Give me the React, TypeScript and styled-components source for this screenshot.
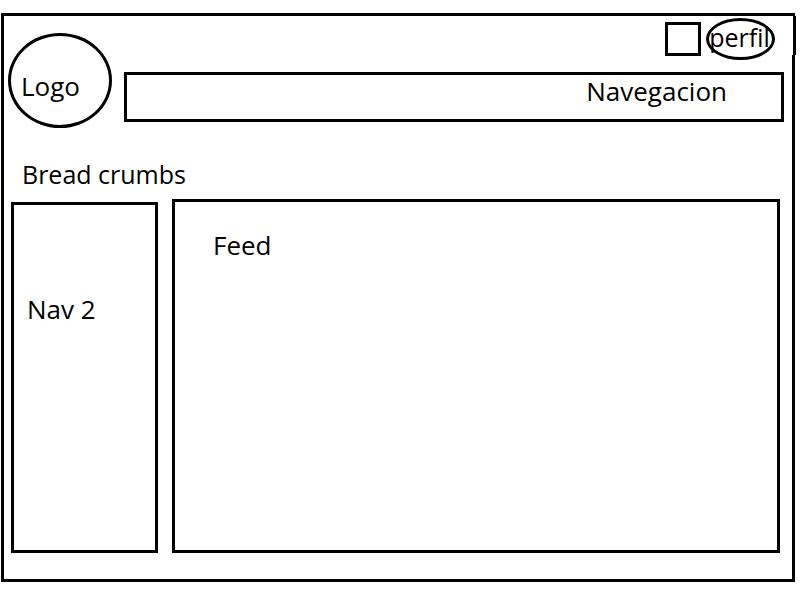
import React from "react";
import styled, { createGlobalStyle } from "styled-components";

const GlobalStyle = createGlobalStyle`
  *, *::before, *::after { box-sizing: border-box; }
  body {
    margin: 0;
    background: #fff;
    color: #000;
    font-family: "Open Sans", "Noto Sans", sans-serif;
    font-size: 26px;
    line-height: 32px;
  }
  a { color: inherit; text-decoration: none; }
`;

const Page = styled.div`
  display: flex;
  min-height: 100vh;
  padding: 13px 5px 18px 1px;
`;

const Frame = styled.div`
  position: relative;
  flex: 1;
  display: flex;
  flex-direction: column;
  min-width: 0;
  border: 3px solid #000;

  &::after {
    content: "";
    position: absolute;
    top: 0;
    right: -4px;
    width: 4px;
    height: 39px;
    background: #000;
    border-left: 1px solid #fff;
  }
`;

const Header = styled.header`
  display: flex;
  gap: 12px;
  padding: 2px 8px 0 4px;
`;

const Logo = styled.a`
  flex: none;
  width: 104px;
  height: 95px;
  margin-top: 15px;
  padding: 34px 0 0 10px;
  border: 3px solid #000;
  border-radius: 50%;
`;

const HeaderMain = styled.div`
  flex: 1;
  display: flex;
  flex-direction: column;
  gap: 12px;
  min-width: 0;
`;

const UserTools = styled.div`
  display: flex;
  align-items: center;
  justify-content: flex-end;
  gap: 5px;
  padding-right: 9px;
`;

const SquareButton = styled.button`
  width: 36px;
  height: 34px;
  padding: 0;
  background: #fff;
  border: 3px solid #000;
`;

const ProfileButton = styled.button`
  display: flex;
  justify-content: center;
  width: 69px;
  height: 42px;
  padding: 0 2px 2px 0;
  background: #fff;
  border: 3px solid #000;
  border-radius: 50%;
  color: inherit;
  font: inherit;
  font-size: 25px;
  white-space: nowrap;
`;

const NavBar = styled.nav`
  display: flex;
  justify-content: flex-end;
  height: 50px;
  padding-right: 54px;
  border: 3px solid #000;
`;

const Breadcrumbs = styled.nav`
  padding: 30px 18px 9px;
  font-size: 25px;
`;

const Content = styled.div`
  flex: 1;
  display: flex;
  gap: 14px;
  padding: 0 12px 26px 7px;
`;

const SideNav = styled.nav`
  flex: none;
  width: 147px;
  margin-top: 3px;
  padding: 88px 13px 0;
  border: 3px solid #000;
`;

const Feed = styled.main`
  flex: 1;
  min-width: 0;
  padding: 27px 38px 0;
  border: 3px solid #000;
`;

export default function App() {
  return (
    <>
      <GlobalStyle />
      <Page>
        <Frame>
          <Header>
            <Logo href="#">Logo</Logo>
            <HeaderMain>
              <UserTools>
                <SquareButton type="button" aria-label="Menu" />
                <ProfileButton type="button">perfil</ProfileButton>
              </UserTools>
              <NavBar>
                <a href="#">Navegacion</a>
              </NavBar>
            </HeaderMain>
          </Header>
          <Breadcrumbs>Bread crumbs</Breadcrumbs>
          <Content>
            <SideNav>
              <a href="#">Nav 2</a>
            </SideNav>
            <Feed>Feed</Feed>
          </Content>
        </Frame>
      </Page>
    </>
  );
}
